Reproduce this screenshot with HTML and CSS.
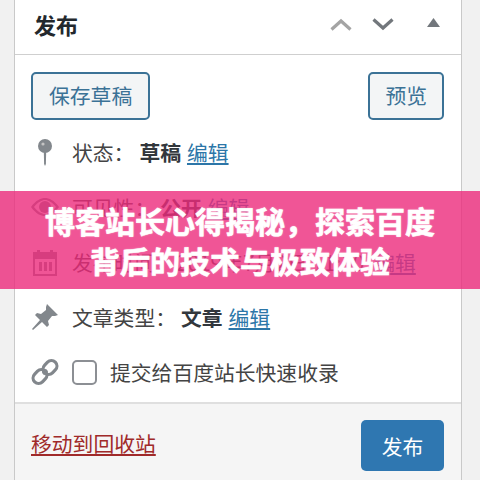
FILE: index.html
```html
<!DOCTYPE html>
<html lang="zh-CN">
<head>
<meta charset="utf-8">
<title>发布</title>
<link rel="stylesheet" href="styles.css">
</head>
<body>
<div class="panel">
  <header class="head">
    <h2 class="title">发布</h2>
    <div class="controls">
      <svg class="ctl up" viewBox="0 0 22 13"><path d="M1.5 11.5 L11 3 L20.5 11.5"/></svg>
      <svg class="ctl down" viewBox="0 0 22 13"><path d="M1.5 1.5 L11 10 L20.5 1.5"/></svg>
      <svg class="tri" viewBox="0 0 13 9"><path d="M6.5 0 L13 9 L0 9 Z"/></svg>
    </div>
  </header>
  <div class="actions">
    <button class="btn btn-wide">保存草稿</button>
    <button class="btn">预览</button>
  </div>
  <div class="rows">
    <div class="row">
      <svg class="ico" viewBox="0 0 28 28"><circle cx="14" cy="8" r="7"/><path d="M12.8 13h2.4l-.3 13-.9 2-.9-2z"/><circle class="hole" cx="12" cy="6" r="1.6"/></svg>
      <span>状态：</span><b class="val">草稿</b><a class="edit">编辑</a>
    </div>
    <div class="row">
      <svg class="ico" viewBox="0 0 28 28"><path fill-rule="evenodd" d="M0 14C5 7 10 5 14 5s9 2 14 9c-5 7-10 9-14 9S5 21 0 14zm3 0c4 5 8 7 11 7s7-2 11-7c-4-5-8-7-11-7S7 9 3 14z"/><circle cx="14" cy="14" r="6"/></svg>
      <span>可见性：</span><b class="val">公开</b><a class="edit">编辑</a>
    </div>
    <div class="row">
      <svg class="ico" viewBox="0 0 28 28"><path fill-rule="evenodd" d="M2 4h4V2h3v2h10V2h3v2h4v24H2zm2 7v15h20V11z"/><path d="M8 14h3v9H8zM13 14h3v9h-3zM18 14h3v9h-3z"/></svg>
      <span>发布时间：2019年7月2日 11:30</span><a class="edit push">编辑</a>
    </div>
    <div class="row">
      <svg class="ico" viewBox="0 0 28 28"><path d="M16 1l11 11-3 1-3 0-4 5 1 4-2 2-5-5-9 8-1-1 8-9-5-5 2-2 4 1 5-4 0-3z"/></svg>
      <span>文章类型：</span><b class="val">文章</b><a class="edit">编辑</a>
    </div>
    <div class="row row-check">
      <svg class="ico" viewBox="0 0 28 28"><g class="chain"><path d="M12 16 L16 12"/><rect x="1.5" y="13" width="15" height="11" rx="5.5" transform="rotate(-45 9 18.5)"/><rect x="11.5" y="4" width="15" height="11" rx="5.5" transform="rotate(-45 19 9.5)"/></g></svg>
      <label class="check"><span class="box"></span>提交给百度站长快速收录</label>
    </div>
  </div>
  <footer class="foot">
    <a class="trash">移动到回收站</a>
    <button class="publish">发布</button>
  </footer>
</div>
<div class="banner">
  <h1 class="banner-text">博客站长心得揭秘，探索百度背后的技术与极致体验</h1>
</div>
</body>
</html>
```

FILE: styles.css
```css
* { box-sizing: border-box; }
html, body { margin: 0; height: 480px; overflow: hidden; }
body {
  position: relative;
  background: #f1f1f1;
  font-family: "Noto Sans CJK SC", "Liberation Sans", sans-serif;
  color: #444;
}
.panel {
  width: 448px;
  height: 480px;
  margin-left: 14px;
  background: #fff;
  border-left: 1px solid #c9c9c9;
  border-right: 1px solid #c9c9c9;
  display: flex;
  flex-direction: column;
}
.head {
  height: 55px;
  border-bottom: 1px solid #cfcfcf;
  display: flex;
  align-items: center;
  justify-content: space-between;
  padding: 0 21px 6px 19px;
}
.title { margin: 0; font-size: 22px; font-weight: 700; color: #23282d; }
.controls { display: flex; align-items: center; margin-top: 0; }
.ctl { width: 22px; height: 13px; fill: none; stroke-width: 3.2; }
.up { stroke: #a4a4a4; margin-right: 20px; }
.down { stroke: #72777c; margin-right: 33px; }
.tri { width: 13px; height: 9px; fill: #72777c; margin-top: -3px; }
.actions {
  display: flex;
  justify-content: space-between;
  padding: 17px 17px 0 16px;
}
.btn {
  height: 48px;
  padding: 0 15px 3px;
  font: 400 20.8px "Noto Sans CJK SC", sans-serif;
  color: #3b7296;
  background: #f3f5f6;
  border: 2px solid #3b7296;
  border-radius: 5px;
}
.btn-wide { padding: 0 16px 3px; }
.rows { flex: 1; padding-top: 4px; }
.row {
  height: 55px;
  display: flex;
  align-items: center;
  padding-left: 16px;
  font-size: 20.8px;
  color: #444;
  white-space: nowrap;
}
.row-check { padding-top: 1px; }
.ico { width: 28px; height: 28px; margin-right: 13px; flex: none; fill: #82878c; }
.hole { fill: #c4c4c4; }
.chain { fill: none; stroke: #82878c; stroke-width: 3.2; }
.val { margin-left: 5px; font-weight: 700; color: #32373c; }
.edit { margin-left: 6px; color: #2c76a8; text-decoration: underline; }
.push { margin-left: 10px; }
.check { display: flex; align-items: center; }
.box {
  width: 25px;
  height: 25px;
  margin-right: 13px;
  background: #fff;
  border: 2px solid #8c8f94;
  border-radius: 5px;
}
.foot {
  height: 78px;
  background: #f5f5f5;
  border-top: 2px solid #dfdfdf;
  display: flex;
  align-items: flex-start;
  justify-content: space-between;
  padding: 16px 17px 0 16px;
}
.trash { margin-top: 8px; font-size: 20.8px; color: #a02a2a; text-decoration: underline; }
.publish {
  width: 83px;
  height: 51px;
  font: 400 20.8px "Noto Sans CJK SC", sans-serif;
  color: #fff;
  background: #2f77b1;
  border: 0;
  border-radius: 5px;
}
.banner {
  position: absolute;
  left: 0;
  top: 191px;
  width: 480px;
  height: 98px;
  background: rgba(236, 42, 124, .8);
  display: flex;
  align-items: center;
  justify-content: center;
}
.banner-text {
  width: 400px;
  margin: 0;
  text-align: center;
  font-size: 30px;
  line-height: 40px;
  font-weight: 700;
  color: #fff;
  -webkit-text-stroke: .6px #fff;
  text-shadow: 0 0 2px rgba(255,255,255,.6);
}
```
